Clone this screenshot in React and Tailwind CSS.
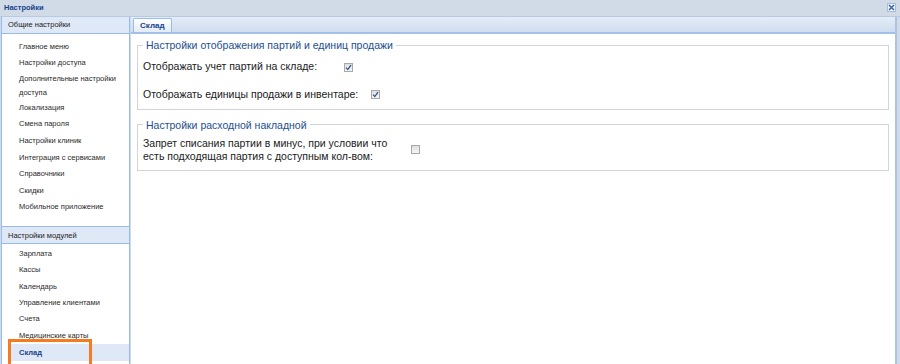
import React from "react";

const general = [
  ["Главное меню"],
  ["Настройки доступа"],
  ["Дополнительные настройки", "доступа"],
  ["Локализация"],
  ["Смена пароля"],
  ["Настройки клиник"],
  ["Интеграция с сервисами"],
  ["Справочники"],
  ["Скидки"],
  ["Мобильное приложение"],
];

const modules = [
  "Зарплата",
  "Кассы",
  "Календарь",
  "Управление клиентами",
  "Счета",
  "Медицинские карты",
];

function Check({ checked }) {
  return (
    <span className="inline-flex shrink-0 w-[9px] h-[9px] border border-[#a8a8a8] bg-gradient-to-b from-[#dedede] to-[#f6f6f6] items-center justify-center">
      {checked && (
        <svg width="7" height="7" viewBox="0 0 7 7">
          <path d="M1 3.6 L2.8 5.6 L6 1.2" fill="none" stroke="#2b4f8c" strokeWidth="1.2" />
        </svg>
      )}
    </span>
  );
}

export default function App() {
  return (
    <div
      className="w-[900px] h-[364px] bg-[#d1dbe8] flex flex-col overflow-hidden relative"
      style={{ fontFamily: "'Liberation Sans', 'DejaVu Sans', sans-serif" }}
    >
      {/* title */}
      <div className="h-[17px] shrink-0 flex items-center justify-between pl-[4px] pr-[4px] border-b border-[#b9cbe3]">
        <span className="text-[7.5px] font-bold text-[#15428b] leading-none">Настройки</span>
        <span className="w-[9px] h-[9px] bg-[#eef3fa] border border-[#a9bcd8] flex items-center justify-center mt-[-1px]">
          <svg width="7" height="7" viewBox="0 0 7 7">
            <path d="M1 1 L6 6 M6 1 L1 6" stroke="#3a68b0" strokeWidth="1.5" />
          </svg>
        </span>
      </div>
      <div className="flex-1 flex gap-[1px] pl-[1px] pr-[3px] min-h-0">
        {/* left panel */}
        <div className="w-[129px] shrink-0 flex flex-col bg-white border-l border-r border-[#99bbe8]">
          <div className="h-[17px] shrink-0 bg-[#dfe8f6] border-b border-[#99bbe8] flex items-center pl-[6px] text-[7.5px] text-[#222]">
            Общие настройки
          </div>
          <div className="flex flex-col pl-[17px] pt-[4px] text-[7.5px] text-[#2a2a2a] whitespace-nowrap">
            {general.map((g, i) => (
              <div key={i} className="flex flex-col">
                {g.map((l, j) => (
                  <div key={j} className={(g.length > 1 ? "h-[14px]" : "h-[16.6px]") + " flex items-center"}>
                    {l}
                  </div>
                ))}
              </div>
            ))}
          </div>
          <div className="mt-[11px] h-[18px] shrink-0 bg-[#dfe8f6] border-t border-b border-[#99bbe8] flex items-center pl-[6px] text-[7.5px] text-[#222]">
            Настройки модулей
          </div>
          <div className="flex flex-col pt-[1px] text-[7.5px] text-[#2a2a2a] whitespace-nowrap">
            {modules.map((m) => (
              <div key={m} className="h-[16.4px] flex items-center pl-[17px]">{m}</div>
            ))}
            <div className="h-[17px] ml-[7px] flex items-center pl-[10px] bg-[#dfe8f6] font-bold text-[#15428b]">
              Склад
            </div>
          </div>
        </div>
        {/* right panel */}
        <div className="flex-1 flex flex-col bg-white border-r-[2px] border-[#aac4e6]">
          <div className="h-[17px] shrink-0 bg-gradient-to-b from-[#e4ecf7] to-[#d0ddef] border-b-[2px] border-[#a3c0e8] flex items-end pl-[2px]">
            <div className="h-[14px] px-[6px] bg-gradient-to-b from-[#ffffff] to-[#e3ebf6] border border-b-0 border-[#99bbe8] rounded-t-[2px] flex items-center text-[8px] font-bold text-[#15428b]">
              Склад
            </div>
          </div>
          <div className="flex flex-col px-[6px] pt-[5px] gap-[9px] text-[10.5px] text-[#1a1a1a]">
            <fieldset className="border border-[#d3d3dc] pl-[5px] pr-2 pb-[6px]">
              <legend className="px-[3px] text-[10.5px] text-[#234f8f] leading-[12px]">
                Настройки отображения партий и единиц продажи
              </legend>
              <div className="flex items-center h-[16px] mt-[8px] whitespace-nowrap">
                <span className="w-[201px]">Отображать учет партий на складе:</span>
                <Check checked />
              </div>
              <div className="flex items-center h-[16px] mt-[11.5px] whitespace-nowrap">
                <span className="w-[228px]">Отображать единицы продажи в инвентаре:</span>
                <Check checked />
              </div>
            </fieldset>
            <fieldset className="border border-[#d3d3dc] pl-[5px] pr-2 pb-[7px]">
              <legend className="px-[3px] text-[10.5px] text-[#234f8f] leading-[12px]">
                Настройки расходной накладной
              </legend>
              <div className="flex items-center mt-[6px] whitespace-nowrap">
                <span className="w-[268px] leading-[13px]">
                  Запрет списания партии в минус, при условии что
                  <br />
                  есть подходящая партия с доступным кол-вом:
                </span>
                <Check />
              </div>
            </fieldset>
          </div>
        </div>
      </div>
      {/* highlight annotation */}
      <div className="absolute left-[8px] top-[339px] w-[84px] h-[30px] border-[3px] border-[#f47b20] pointer-events-none" />
    </div>
  );
}
